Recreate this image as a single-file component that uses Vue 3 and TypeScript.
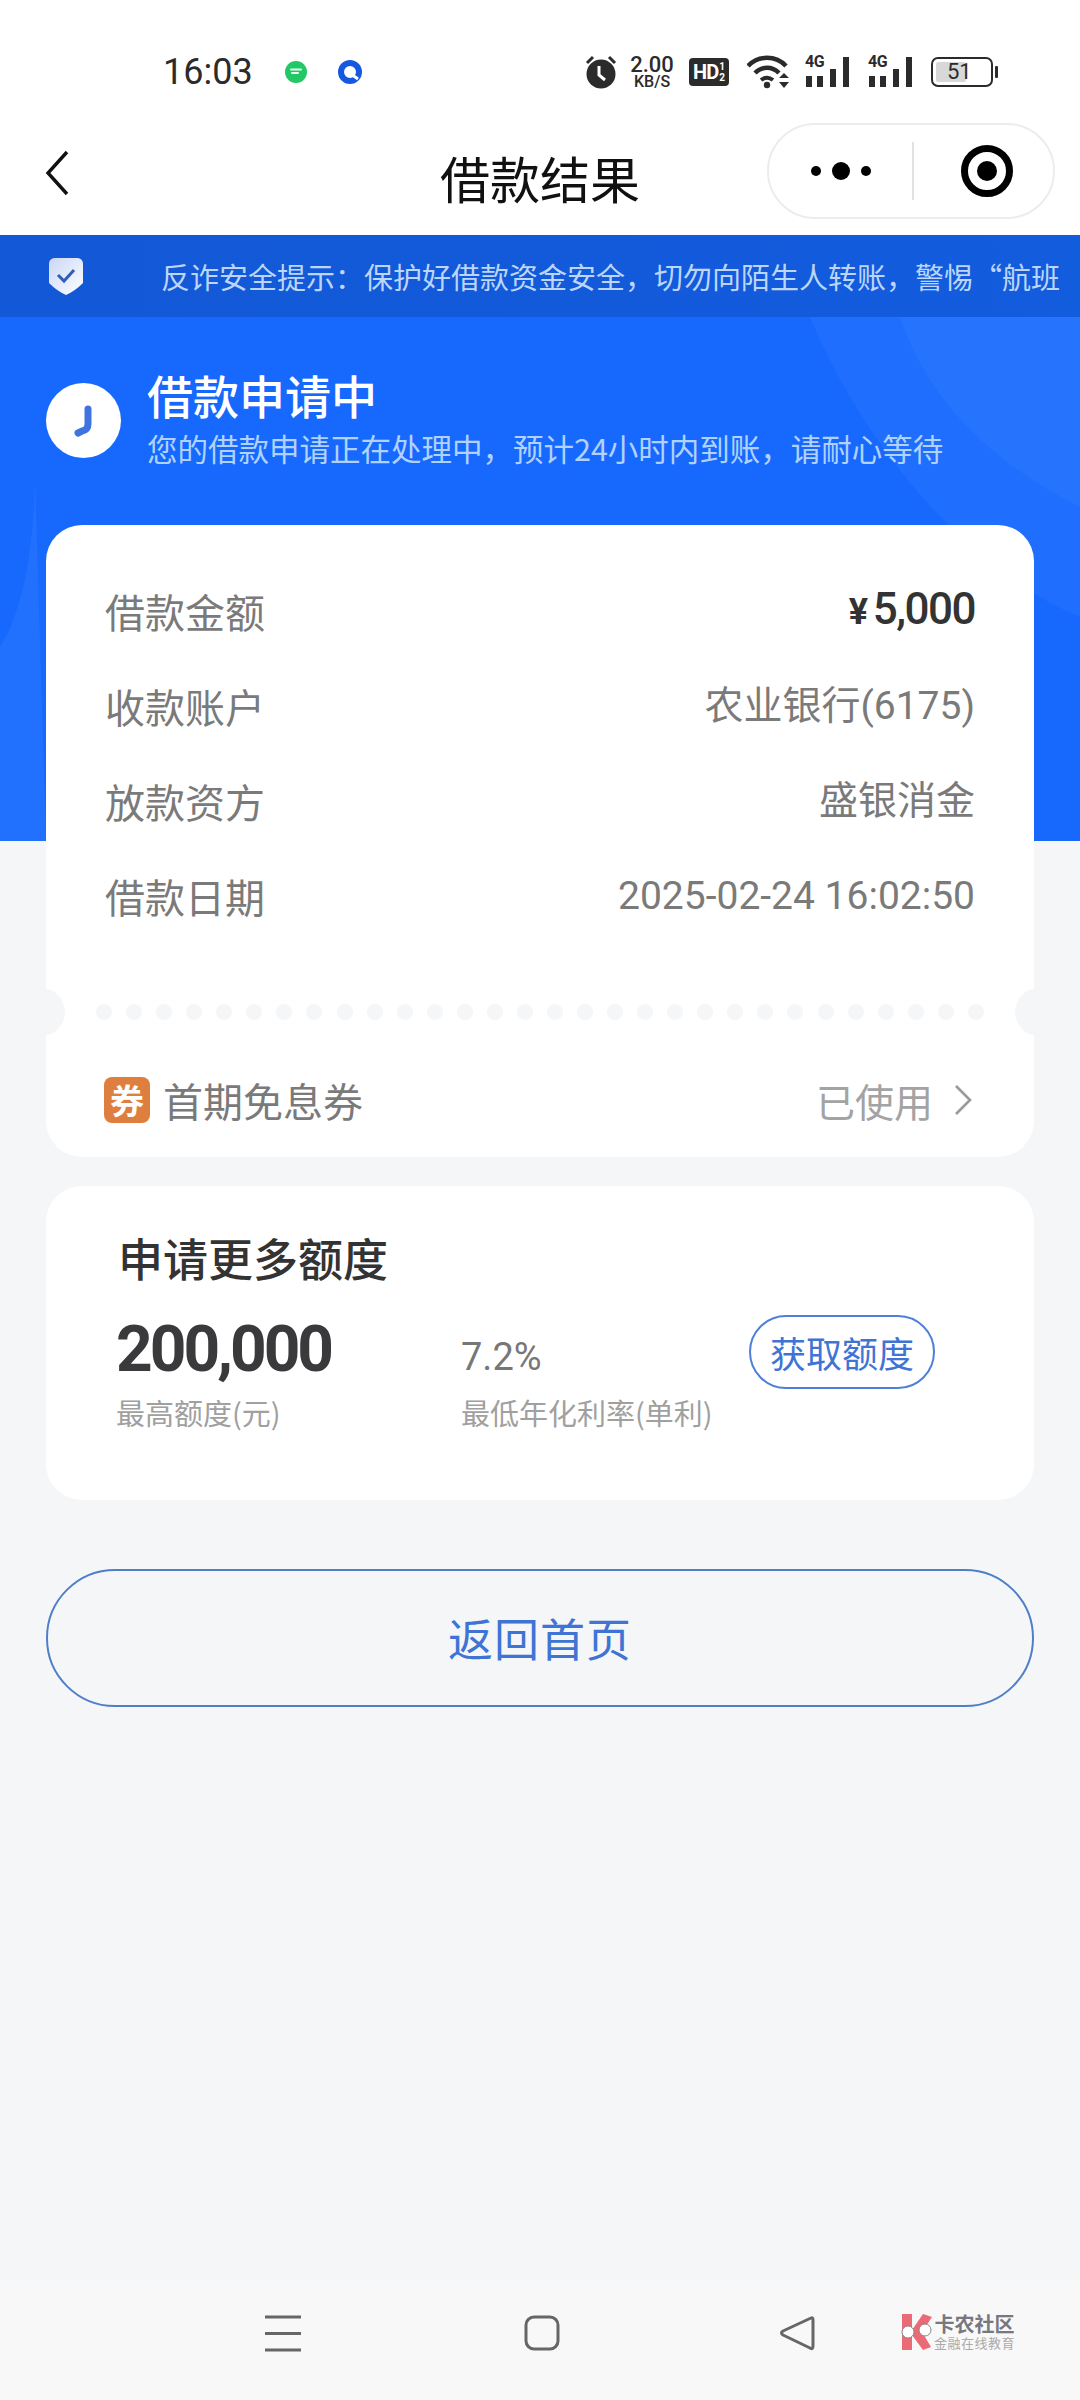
<script setup lang="ts">
const rows = [
  { label: '借款金额', value: '', key: 'amount' },
  { label: '收款账户', value: '农业银行(6175)', key: 'bank' },
  { label: '放款资方', value: '盛银消金', key: 'lender' },
  { label: '借款日期', value: '2025-02-24 16:02:50', key: 'date' },
]
const dots = Array.from({ length: 30 }, (_, i) => i)
</script>

<template>
  <div class="page">
    <div class="statusbar">
      <span class="time">16:03</span>
      <svg class="app-dot first" width="24" height="24" viewBox="0 0 24 24">
        <circle cx="12" cy="12" r="11" fill="#22c866" />
        <path d="M7 9.5h10M8 13h6" stroke="#e8fff0" stroke-width="2" stroke-linecap="round" />
      </svg>
      <svg class="app-dot second" width="26" height="26" viewBox="0 0 26 26">
        <circle cx="13" cy="13" r="9" fill="none" stroke="#1559e0" stroke-width="6" />
        <path d="M14 15l7 5" stroke="#fff" stroke-width="3" />
      </svg>
      <div class="status-right">
        <svg width="32" height="34" viewBox="0 0 32 34">
          <circle cx="16" cy="19" r="14.5" fill="#2b2b2b" />
          <path d="M14 11v9l6 5" fill="none" stroke="#fff" stroke-width="3" />
          <path d="M2 8l6-6M30 8l-6-6" stroke="#2b2b2b" stroke-width="3" />
        </svg>
        <div class="speed"><span class="speed-num">2.00</span><span class="speed-unit">KB/S</span></div>
        <div class="hd"><span class="hd-main">HD</span><span class="hd-frac"><i>1</i><i>2</i></span></div>
        <svg width="44" height="34" viewBox="0 0 44 34">
          <path d="M1 11C11 0 29 0 39 11" fill="none" stroke="#2b2b2b" stroke-width="4.5" />
          <path d="M8 18c7-7 17-7 24 0" fill="none" stroke="#2b2b2b" stroke-width="4.5" />
          <path d="M14 25c4-3 8-3 12 0" fill="none" stroke="#2b2b2b" stroke-width="4" />
          <circle cx="20" cy="30" r="3.2" fill="#2b2b2b" />
          <path d="M32 23l5-5 5 5zM32 27l5 6 5-6z" fill="#2b2b2b" />
        </svg>
        <div v-for="n in 2" :key="n" class="signal">
          <span class="sig-label">4G</span>
          <svg width="46" height="30" viewBox="0 0 46 30">
            <rect x="1" y="19" width="6" height="11" fill="#2b2b2b" />
            <rect x="12" y="19" width="6" height="11" fill="#2b2b2b" />
            <rect x="25" y="12" width="6" height="18" fill="#2b2b2b" />
            <rect x="38" y="0" width="6" height="30" fill="#2b2b2b" />
          </svg>
        </div>
        <div class="battery">
          <div class="battery-body">
            <div class="battery-fill"></div>
            <span class="battery-num">51</span>
          </div>
          <div class="battery-nub"></div>
        </div>
      </div>
    </div>

    <div class="navbar">
      <svg class="back" width="24" height="46" viewBox="0 0 24 46">
        <path d="M22 2L3 23l19 21" fill="none" stroke="#111" stroke-width="3.4" />
      </svg>
      <span class="nav-title">借款结果</span>
      <div class="capsule">
        <div class="more"><i class="sm"></i><i class="lg"></i><i class="sm"></i></div>
        <div class="divider"></div>
        <div class="target"><i></i></div>
      </div>
    </div>

    <div class="notice">
      <svg width="34" height="38" viewBox="0 0 34 38">
        <defs>
          <linearGradient id="shieldFill" x1="0" y1="0" x2="1" y2="1">
            <stop offset="0" stop-color="#c9d6f6" />
            <stop offset="1" stop-color="#ffffff" />
          </linearGradient>
        </defs>
        <path d="M5 1h24q5 1 5 6v19q-8 8-17 12Q8 34 0 26V7q0-5 5-6z" fill="url(#shieldFill)" />
        <path d="M9 18l6 6 10-11" fill="none" stroke="#2f5fb8" stroke-width="3" />
      </svg>
      <div class="notice-text">反诈安全提示：保护好借款资金安全，切勿向陌生人转账，警惕“航班延误”诈骗信息</div>
    </div>

    <div class="main">
      <div class="hero">
        <svg class="hero-decor" width="1080" height="524" viewBox="0 0 1080 524">
          <path d="M810 0C860 120 960 250 1080 300V0z" fill="#ffffff" opacity="0.035" />
          <path d="M900 0C930 90 1000 150 1080 190V0z" fill="#ffffff" opacity="0.035" />
          <path d="M0 524V330C20 300 34 240 35 160L46 524z" fill="#ffffff" opacity="0.05" />
        </svg>
        <div class="hero-content">
          <div class="clock">
            <svg width="30" height="36" viewBox="0 0 30 36">
              <path d="M19 6v15q0 6-6 7l-4 2" fill="none" stroke="#3f74e0" stroke-width="7" stroke-linecap="round" />
            </svg>
          </div>
          <div class="hero-text">
            <div class="hero-title">借款申请中</div>
            <div class="hero-sub">您的借款申请正在处理中，预计24小时内到账，请耐心等待</div>
          </div>
        </div>
      </div>

      <div class="content">
        <div class="card detail">
          <div class="rows">
            <div v-for="row in rows" :key="row.key" class="row">
              <span class="row-label">{{ row.label }}</span>
              <span v-if="row.key === 'amount'" class="amount"><small>¥</small>5,000</span>
              <span v-else class="row-value">{{ row.value }}</span>
            </div>
          </div>
          <div class="perforation">
            <i class="notch left"></i>
            <i v-for="d in dots" :key="d" class="dot"></i>
            <i class="notch right"></i>
          </div>
          <div class="coupon">
            <span class="coupon-icon">券</span>
            <span class="coupon-name">首期免息券</span>
            <span class="coupon-state">已使用</span>
            <svg width="20" height="32" viewBox="0 0 20 32">
              <path d="M3 2l14 14L3 30" fill="none" stroke="#999" stroke-width="2.6" />
            </svg>
          </div>
        </div>

        <div class="card more-card">
          <div class="more-title">申请更多额度</div>
          <div class="more-body">
            <div class="stat big">
              <div class="big-num">200,000</div>
              <div class="stat-label">最高额度(元)</div>
            </div>
            <div class="stat rate">
              <div class="rate-num">7.2%</div>
              <div class="stat-label">最低年化利率(单利)</div>
            </div>
            <div class="get-btn">获取额度</div>
          </div>
        </div>

        <div class="home-btn">返回首页</div>
      </div>
    </div>

    <div class="bottom-nav">
      <svg width="36" height="37" viewBox="0 0 36 37">
        <path d="M0 2h36M0 18.5h36M0 35h36" stroke="#666" stroke-width="3" />
      </svg>
      <svg width="36" height="36" viewBox="0 0 36 36">
        <rect x="2" y="2" width="32" height="32" rx="8" fill="none" stroke="#666" stroke-width="3" />
      </svg>
      <svg width="36" height="36" viewBox="0 0 36 36">
        <path d="M32 3Q34 2 34 5V31Q34 35 31 33L4 20Q1 18 4 16z" fill="none" stroke="#666" stroke-width="3" stroke-linejoin="round" />
      </svg>
      <div class="watermark">
        <svg width="34" height="36" viewBox="0 0 34 36">
          <path d="M3 0h10v16L24 0l9 3-10 15 9 15-8 3-11-15v15H3z" fill="#ea6a76" />
          <circle cx="9" cy="18" r="6" fill="#fff" stroke="#888" stroke-width="1" />
          <circle cx="26" cy="16" r="6" fill="#fff" stroke="#888" stroke-width="1" />
        </svg>
        <div class="wm-text">
          <span class="wm-top">卡农社区</span>
          <span class="wm-bottom">金融在线教育</span>
        </div>
      </div>
    </div>
  </div>
</template>

<style scoped>
.page {
  width: 1080px;
  height: 2400px;
  background: #f5f6f8;
  display: flex;
  flex-direction: column;
  overflow: hidden;
  font-family: "Noto Sans CJK SC", "Noto Sans", sans-serif;
}
.statusbar {
  height: 118px;
  background: #fff;
  display: flex;
  align-items: center;
  padding: 26px 0 0 163px;
  box-sizing: border-box;
  color: #2b2b2b;
}
.time {
  font: 400 36px/1 Roboto, sans-serif;
  width: 121px;
}
.app-dot.first { margin-right: 29px; }
.status-right {
  margin-left: auto;
  margin-right: 82px;
  display: flex;
  align-items: center;
}
.speed {
  display: flex;
  flex-direction: column;
  align-items: center;
  margin-left: 9px;
  width: 52px;
  font-family: Roboto, sans-serif;
  font-weight: 500;
}
.speed-num { font-size: 22px; line-height: 18px; }
.speed-unit { font-size: 16px; line-height: 15px; }
.hd {
  margin-left: 11px;
  width: 40px;
  height: 28px;
  background: #2b2b2b;
  color: #fff;
  border-radius: 4px;
  display: flex;
  align-items: center;
  justify-content: center;
  font-family: Roboto, sans-serif;
  font-weight: 700;
}
.hd-main { font-size: 20px; letter-spacing: -1px; }
.hd-frac {
  display: flex;
  flex-direction: column;
  font-size: 10px;
  line-height: 11px;
  margin-left: 1px;
}
.hd-frac i { font-style: normal; }
.status-right > svg:nth-of-type(2) { margin-left: 18px; }
.signal {
  position: relative;
  margin-left: 14px;
  width: 46px;
  height: 30px;
}
.signal + .signal { margin-left: 17px; }
.sig-label {
  position: absolute;
  left: 0;
  top: -3px;
  font: 700 16px/16px Roboto, sans-serif;
  letter-spacing: -0.5px;
}
.signal svg { display: block; }
.battery {
  margin-left: 17px;
  display: flex;
  align-items: center;
}
.battery-body {
  position: relative;
  width: 62px;
  height: 30px;
  border: 2px solid #2b2b2b;
  border-radius: 7px;
  box-sizing: border-box;
  display: flex;
  align-items: center;
  padding: 3px;
}
.battery-fill {
  width: 30px;
  height: 100%;
  background: #d8d8d8;
  border-radius: 2px;
}
.battery-num {
  position: absolute;
  left: 14px;
  top: 0;
  font: 400 22px/26px Roboto, sans-serif;
}
.battery-nub {
  width: 3px;
  height: 12px;
  margin-left: 2px;
  background: #2b2b2b;
  border-radius: 1px;
}
.navbar {
  height: 117px;
  background: #fff;
  position: relative;
  display: flex;
  align-items: center;
  justify-content: center;
}
.back {
  position: absolute;
  left: 45px;
  top: 32px;
}
.nav-title {
  font-size: 50px;
  line-height: 60px;
  color: #111;
  margin-top: 0;
}
.capsule {
  position: absolute;
  left: 767px;
  top: 5px;
  width: 288px;
  height: 96px;
  box-sizing: border-box;
  border: 2px solid #ececec;
  border-radius: 48px;
  display: flex;
  align-items: center;
}
.more {
  width: 143px;
  display: flex;
  align-items: center;
  justify-content: center;
  gap: 11px;
}
.more i { display: block; border-radius: 50%; background: #000; }
.more .sm { width: 10px; height: 10px; }
.more .lg { width: 18px; height: 18px; }
.divider { width: 2px; height: 58px; background: #e2e2e2; }
.target {
  margin-left: 47px;
  width: 52px;
  height: 52px;
  box-sizing: border-box;
  border: 7px solid #000;
  border-radius: 50%;
  display: flex;
  align-items: center;
  justify-content: center;
}
.target i { width: 20px; height: 20px; background: #000; border-radius: 50%; display: block; }
.notice {
  height: 82px;
  background: linear-gradient(90deg, #1358d6, #125cde);
  display: flex;
  align-items: center;
  padding: 0 20px 0 49px;
  box-sizing: border-box;
}
.notice-text {
  margin-left: 78px;
  flex: 1;
  min-width: 0;
  white-space: nowrap;
  overflow: hidden;
  font-size: 29px;
  line-height: 40px;
  color: #bcd5fb;
}
.main { position: relative; }
.hero {
  height: 524px;
  background: #1769fe;
  position: relative;
  overflow: hidden;
}
.hero-decor { position: absolute; left: 0; top: 0; }
.hero-content {
  position: relative;
  display: flex;
  align-items: center;
  padding: 48px 0 0 46px;
}
.clock {
  width: 75px;
  height: 75px;
  border-radius: 50%;
  background: #fff;
  display: flex;
  align-items: center;
  justify-content: center;
  margin-top: 6px;
}
.hero-text { margin-left: 26px; }
.hero-title {
  font-size: 46px;
  line-height: 58px;
  font-weight: 500;
  color: #fff;
}
.hero-sub {
  font-size: 30.5px;
  line-height: 44px;
  color: #afd2ff;
  white-space: nowrap;
  margin-top: 3px;
}
.content {
  margin-top: -316px;
  position: relative;
  padding: 0 46px;
  display: flex;
  flex-direction: column;
}
.card {
  background: #fff;
  border-radius: 36px;
  position: relative;
}
.detail {
  height: 632px;
  display: flex;
  flex-direction: column;
}
.rows { padding: 38px 59px 0; }
.row {
  height: 95px;
  display: flex;
  align-items: center;
  justify-content: space-between;
}
.row-label {
  font-size: 40px;
  color: #7a7a7a;
  line-height: 50px;
}
.row-value {
  font-size: 39px;
  color: #7a7a7a;
  line-height: 50px;
  font-family: Roboto, "Noto Sans CJK SC", sans-serif;
}
.amount {
  font: 500 44px/50px Roboto, sans-serif;
  color: #333;
  letter-spacing: -1.5px;
}
.amount small {
  font-size: 36px;
  font-weight: 700;
  margin-right: 6px;
}
.perforation {
  position: relative;
  height: 48px;
  margin-top: 45px;
  padding: 0 50px;
  display: flex;
  align-items: center;
  justify-content: space-between;
}
.dot {
  display: block;
  width: 16px;
  height: 16px;
  border-radius: 50%;
  background: #f5f6f8;
}
.notch {
  position: absolute;
  top: 0;
  width: 48px;
  height: 48px;
  border-radius: 50%;
  background: #f5f6f8;
}
.notch.left { left: -29px; }
.notch.right { right: -29px; }
.coupon {
  display: flex;
  align-items: center;
  padding: 39px 61px 0 58px;
}
.coupon-icon {
  width: 46px;
  height: 46px;
  border-radius: 8px;
  background: #de7f3f;
  color: #fff;
  font-size: 34px;
  line-height: 46px;
  text-align: center;
  font-weight: 700;
}
.coupon-name {
  margin-left: 13px;
  font-size: 40px;
  line-height: 50px;
  color: #7a7a7a;
}
.coupon-state {
  margin-left: auto;
  font-size: 39px;
  line-height: 50px;
  color: #a3a3a3;
  margin-right: 20px;
}
.more-card {
  margin-top: 29px;
  height: 314px;
  padding: 42px 0 0 72px;
  box-sizing: border-box;
}
.more-title {
  font-size: 45px;
  line-height: 60px;
  font-weight: 500;
  color: #333;
}
.more-body {
  position: relative;
  display: flex;
  margin-top: 30px;
  margin-left: -2px;
}
.stat { display: flex; flex-direction: column; }
.big { width: 345px; }
.big-num {
  font: 700 64px/64px Roboto, sans-serif;
  color: #3a3a3c;
  letter-spacing: -3px;
  height: 72px;
}
.rate-num {
  font: 400 38px/46px Roboto, sans-serif;
  color: #777;
  height: 72px;
  padding-top: 16px;
  box-sizing: border-box;
}
.stat-label {
  font-size: 29px;
  line-height: 40px;
  color: #a0a0a0;
  margin-top: 2px;
  white-space: nowrap;
  font-family: "Noto Sans CJK SC", sans-serif;
}
.get-btn {
  position: absolute;
  left: 633px;
  top: -3px;
  width: 186px;
  height: 74px;
  box-sizing: border-box;
  border: 2px solid #4f7fd8;
  border-radius: 37px;
  font-size: 36px;
  line-height: 70px;
  text-align: center;
  color: #3f74d5;
  white-space: nowrap;
}
.home-btn {
  margin-top: 69px;
  height: 138px;
  box-sizing: border-box;
  border: 2px solid #4f7fc8;
  border-radius: 69px;
  font-size: 45px;
  line-height: 134px;
  text-align: center;
  color: #3f74d5;
  letter-spacing: 1px;
}
.bottom-nav {
  margin-top: auto;
  height: 120px;
  background: #f8f8f8;
  display: flex;
  align-items: flex-start;
  padding: 35px 0 0 265px;
  box-sizing: border-box;
  gap: 223px;
}
.bottom-nav > svg:nth-of-type(3) { margin-left: -4px; margin-right: -139px; }
.watermark {
  display: flex;
  align-items: center;
  margin-top: -2px;
  gap: 1px;
}
.wm-text {
  display: flex;
  flex-direction: column;
  align-items: center;
}
.wm-top {
  font-size: 20px;
  line-height: 22px;
  font-weight: 700;
  color: #77777f;
}
.wm-bottom {
  font-size: 13px;
  line-height: 15px;
  color: #aaa;
  letter-spacing: 0.5px;
}
</style>
